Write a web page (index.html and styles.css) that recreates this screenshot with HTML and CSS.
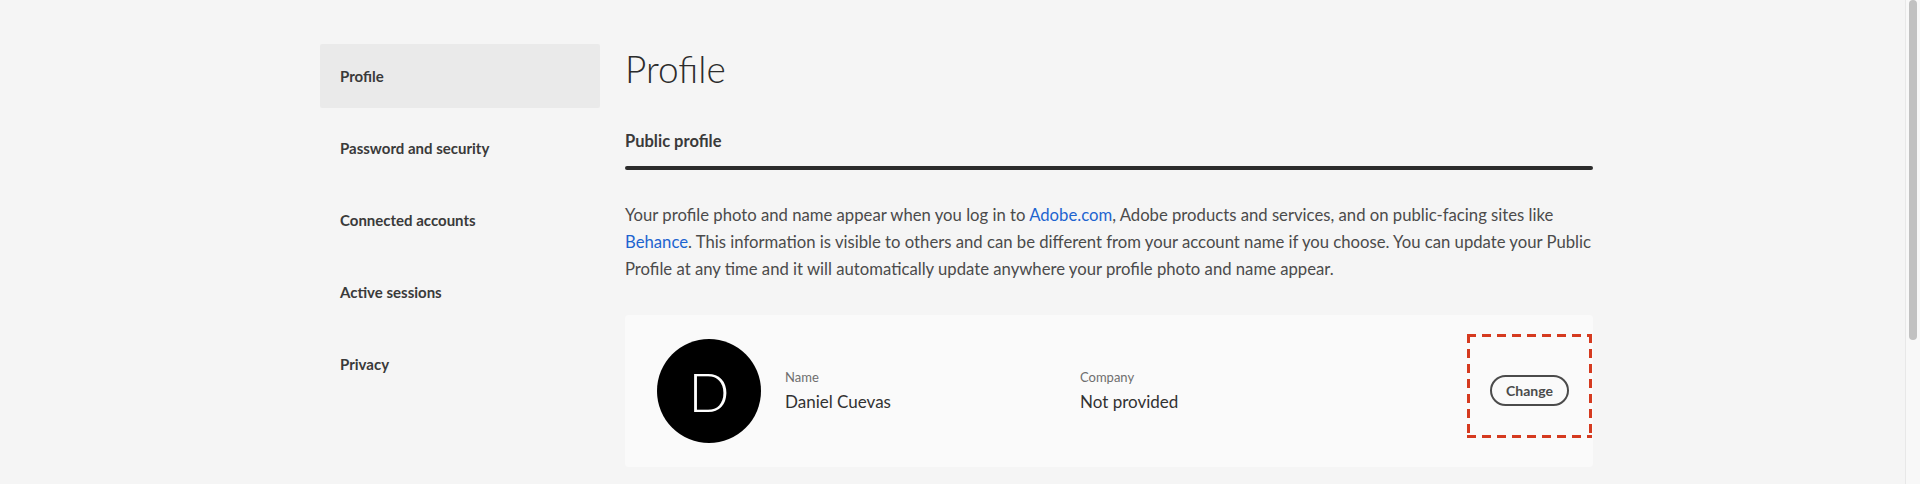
FILE: index.html
```html
<!DOCTYPE html>
<html lang="en">
<head>
    <meta charset="UTF-8">
    <meta name="viewport" content="width=device-width, initial-scale=1.0">
    <title>Profile</title>
    <link rel="stylesheet" href="styles.css">
</head>
<body>
    <div class="page">
        <nav class="sidenav">
            <a class="nav-item active" href="#">Profile</a>
            <a class="nav-item" href="#">Password and security</a>
            <a class="nav-item" href="#">Connected accounts</a>
            <a class="nav-item" href="#">Active sessions</a>
            <a class="nav-item" href="#">Privacy</a>
        </nav>

        <main class="content">
            <h1>Profile</h1>
            <h2 class="section-title">Public profile</h2>
            <div class="section-rule"></div>

            <p class="intro">Your profile photo and name appear when you log in to <a href="#">Adobe.com</a>, Adobe products and services, and on public-facing sites like <a href="#">Behance</a>. This information is visible to others and can be different from your account name if you choose. You can update your Public Profile at any time and it will automatically update anywhere your profile photo and name appear.</p>

            <div class="profile-card">
                <div class="avatar">D</div>
                <div class="field">
                    <div class="field-label">Name</div>
                    <div class="field-value">Daniel Cuevas</div>
                </div>
                <div class="field">
                    <div class="field-label">Company</div>
                    <div class="field-value">Not provided</div>
                </div>
                <div class="spacer"></div>
                <div class="change-area">
                    <button class="change-btn">Change</button>
                </div>
            </div>
        </main>
    </div>

    <!-- window scrollbar, as it shows in the capture -->
    <div class="scrollbar"><div class="scrollbar-thumb"></div></div>
</body>
</html>
```

FILE: styles.css
```css
html, body {
    margin: 0;
    padding: 0;
}
body {
    font-family: Lato, "Noto Sans", sans-serif;
    background-color: #f5f5f5;
    color: #4b4b4b;
}
.page {
    display: flex;
    min-height: 672px;
    box-sizing: border-box;
    padding: 44px 0 0 320px;
}

/* left menu */
.sidenav {
    width: 280px;
    flex-shrink: 0;
    display: flex;
    flex-direction: column;
    gap: 8px;
}
.nav-item {
    display: flex;
    align-items: center;
    height: 64px;
    padding-left: 20px;
    font-size: 15px;
    font-weight: 700;
    color: #3a3a3a;
    text-decoration: none;
    border-radius: 2px;
}
.nav-item.active {
    background-color: #eaeaea;
}

/* main column */
.content {
    width: 968px;
    margin-left: 25px;
}
h1 {
    margin: 1px 0 0;
    font-size: 37px;
    line-height: 48px;
    font-weight: 300;
    color: #2c2c2c;
}
.section-title {
    margin: 36px 0 0;
    font-size: 16.5px;
    line-height: 24px;
    font-weight: 700;
    color: #3a3a3a;
}
.section-rule {
    height: 4px;
    margin-top: 13px;
    background-color: #2c2c2c;
    border-radius: 2px;
}
.intro {
    margin: 32px 0 0;
    font-size: 16.7px;
    line-height: 27px;
    color: #4b4b4b;
}
.intro a {
    color: #1d64d0;
    text-decoration: none;
}

/* profile card */
.profile-card {
    display: flex;
    align-items: center;
    margin-top: 32px;
    padding: 24px 1px 24px 32px;
    background-color: #fafafa;
    border-radius: 4px;
}
.avatar {
    width: 104px;
    height: 104px;
    flex-shrink: 0;
    border-radius: 50%;
    background-color: #000;
    color: #fff;
    display: flex;
    align-items: center;
    justify-content: center;
    font-size: 54px;
    font-weight: 300;
}
.field {
    width: 295px;
    margin-left: 24px;
}
.field + .field {
    margin-left: 0;
}
.field-label {
    font-size: 13px;
    line-height: 18px;
    color: #6e6e6e;
}
.field-value {
    margin-top: 4px;
    font-size: 17px;
    line-height: 24px;
    color: #323232;
}
.spacer {
    flex: 1;
}
/* red dashed outline drawn with gradients: 9px dash, 6px gap */
.change-area {
    align-self: flex-start;
    margin-top: -5px;
    width: 125px;
    height: 104px;
    display: flex;
    justify-content: center;
    background:
        repeating-linear-gradient(90deg, #d53a1f 0 9px, transparent 9px 15px) top left / 100% 3px no-repeat,
        repeating-linear-gradient(90deg, #d53a1f 0 9px, transparent 9px 15px) bottom left / 100% 3px no-repeat,
        repeating-linear-gradient(180deg, #d53a1f 0 9px, transparent 9px 15px) top left / 3px 100% no-repeat,
        repeating-linear-gradient(180deg, #d53a1f 0 9px, transparent 9px 15px) top right / 3px 100% no-repeat;
}
.change-btn {
    margin-top: 41px;
    height: 31px;
    padding: 0 14px;
    font-family: Lato, "Noto Sans", sans-serif;
    font-size: 14px;
    font-weight: 700;
    color: #4b4b4b;
    background: transparent;
    border: 2px solid #4b4b4b;
    border-radius: 16px;
    cursor: pointer;
}

.scrollbar {
    position: fixed;
    top: 0;
    right: 0;
    width: 14px;
    height: 100%;
    background-color: #f8f8f8;
    border-left: 1px solid #e8e8e8;
}
.scrollbar-thumb {
    width: 8px;
    height: 340px;
    margin-left: 3px;
    background-color: #c1c1c1;
    border-radius: 4px;
}
```
